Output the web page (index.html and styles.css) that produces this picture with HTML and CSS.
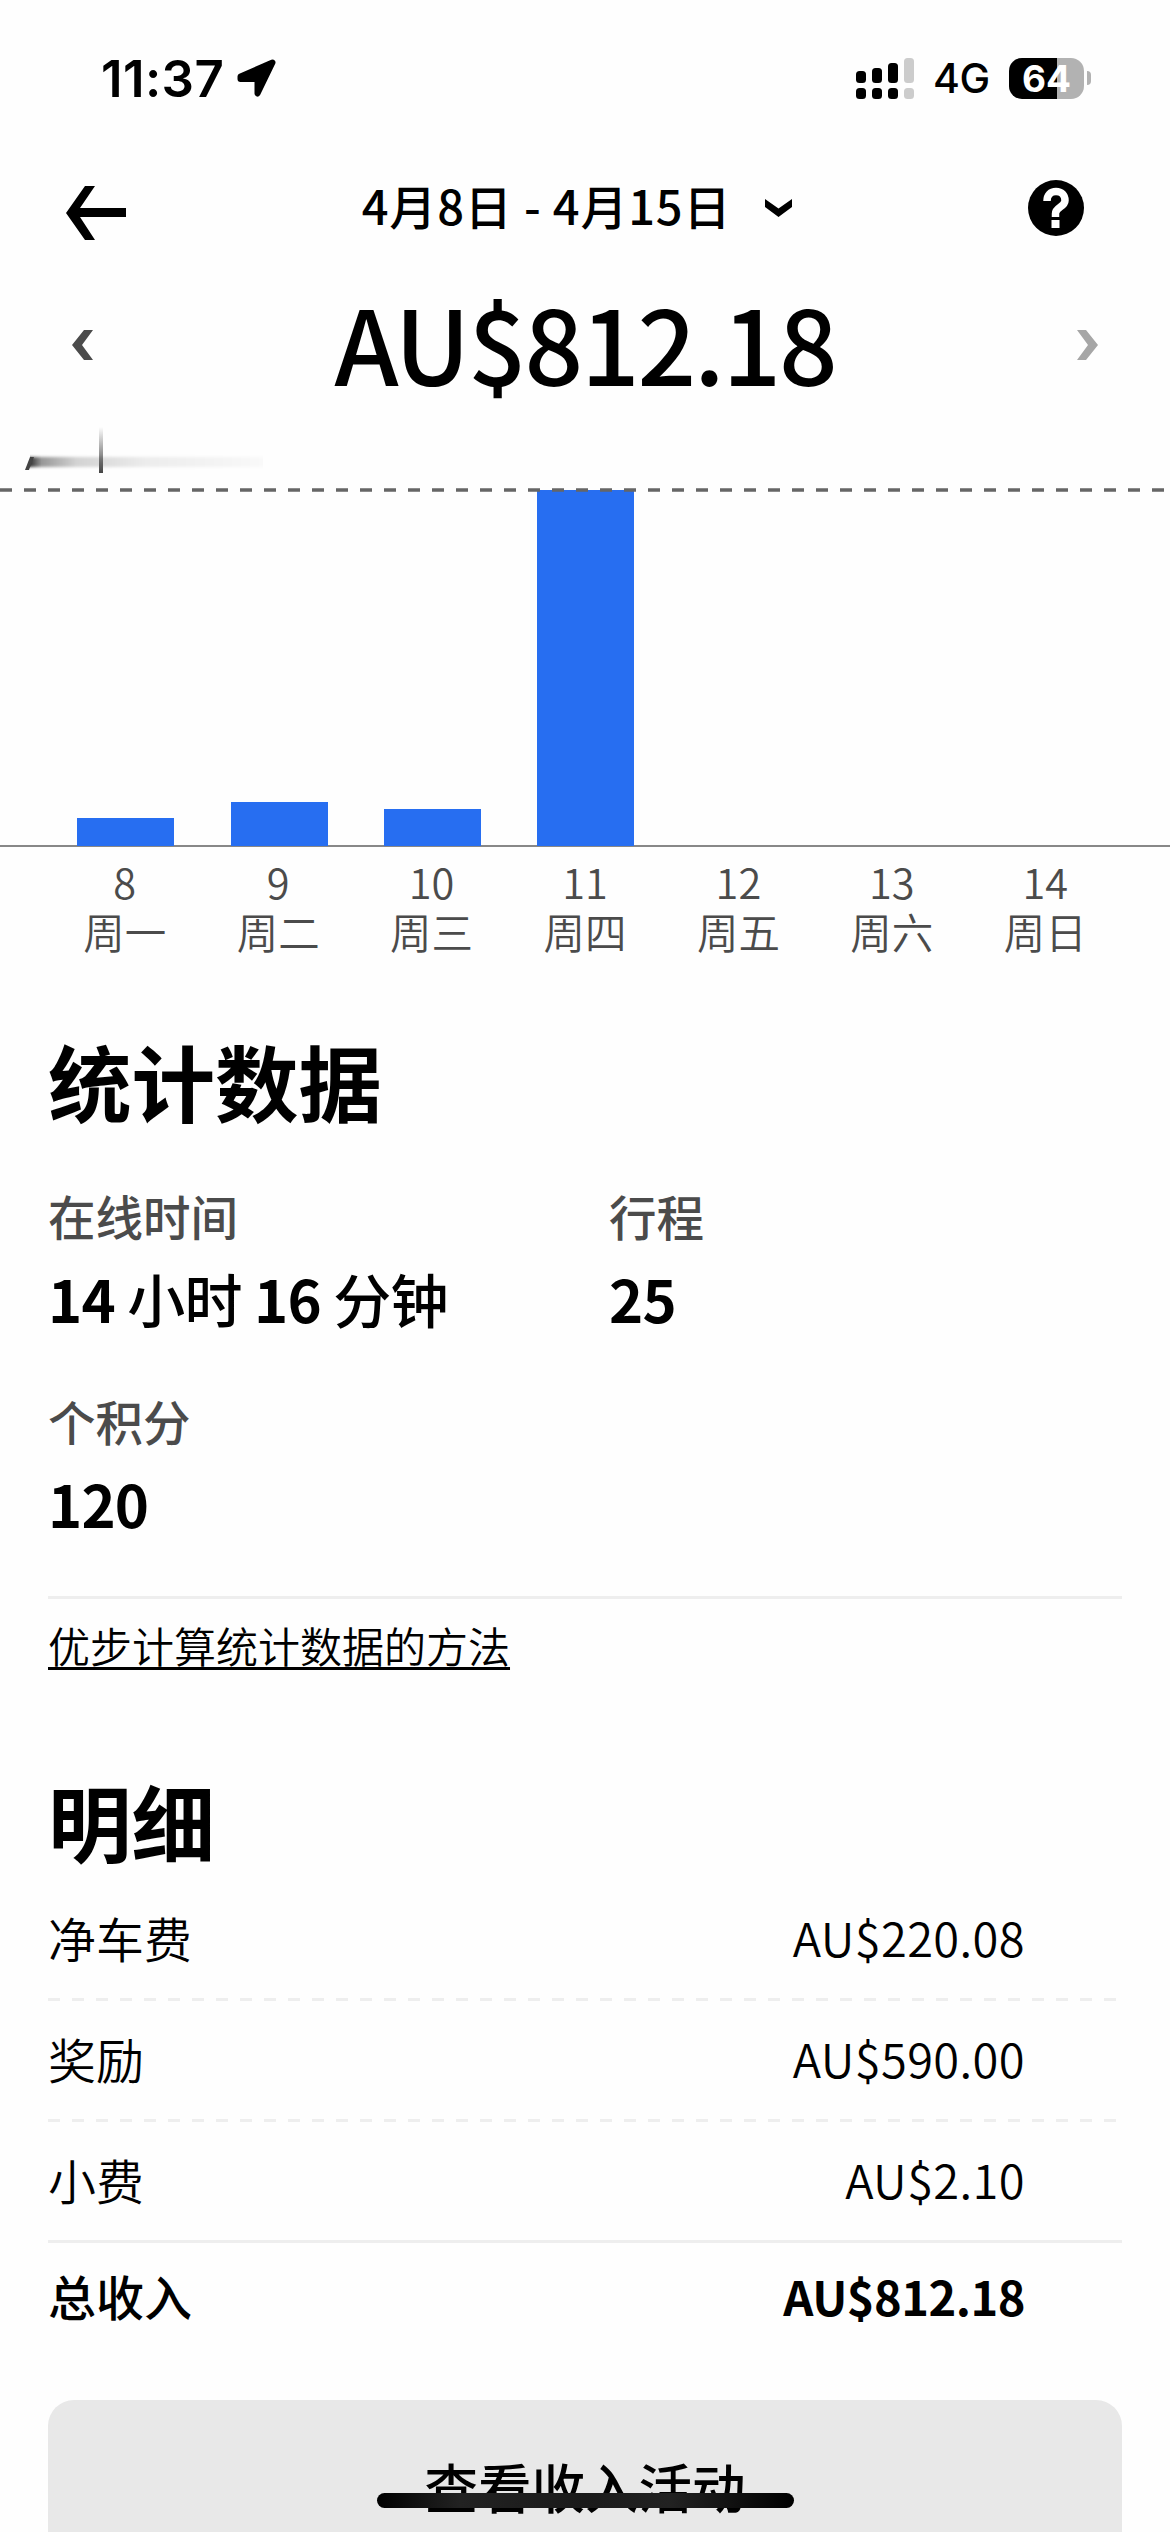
FILE: index.html
```html
<!DOCTYPE html>
<html lang="zh-CN">
<head>
  <meta charset="UTF-8">
  <title>收入 4月8日 - 4月15日</title>
  <link rel="stylesheet" href="styles.css">
</head>
<body>
  <div class="status-bar">
    <span class="time">11:37</span>
    <svg class="location" width="39" height="38" viewBox="0 0 39 38"><path d="M35.500 3.500L20.500 34.500V20H3.500V17.500Z" stroke="#000" stroke-width="6" stroke-linejoin="round"/></svg>
    <svg class="signal" width="58" height="41" viewBox="0 0 58 41">
      <rect x="0" y="13" width="10" height="12" rx="3.5"/>
      <rect x="16" y="10" width="10" height="15" rx="3.5"/>
      <rect x="32" y="5" width="10" height="20" rx="3.5"/>
      <rect x="48" y="0" width="10" height="25" rx="3.5" fill="#ccc"/>
      <rect x="0" y="30" width="10" height="11" rx="3.5"/>
      <rect x="16" y="30" width="10" height="11" rx="3.5"/>
      <rect x="32" y="30" width="10" height="11" rx="3.5"/>
      <rect x="48" y="30" width="10" height="11" rx="3.5" fill="#ccc"/>
    </svg>
    <span class="network">4G</span>
    <span class="battery">64</span>
    <span class="battery-cap"></span>
  </div>

  <header class="top">
    <svg class="back" width="60" height="54" viewBox="0 0 60 54"><path d="M19 0H29L14 22H60V31H14L29 54H19L0 27Z"/></svg>
    <div class="range">
      <span>4月8日 - 4月15日</span>
      <svg width="27" height="18" viewBox="0 0 27 18"><path d="M0 0L13.5 9.5L27 0V8L13.5 18L0 8Z"/></svg>
    </div>
    <svg class="help" width="56" height="56" viewBox="0 0 56 56">
      <circle cx="28" cy="28" r="28"/>
      <path d="M19 21C19 15 22.500 11.500 28 11.500S37 15 37 20.500C37 27 27.500 27 27.500 33.500V37" fill="none" stroke="#fff" stroke-width="7.500"/>
      <rect x="23.500" y="40" width="8" height="8" fill="#fff"/>
    </svg>
  </header>

  <div class="total">
    <svg width="21" height="30" viewBox="0 0 21 30" fill="#4b4b4b"><path d="M12 0H21L10 15L21 30H12L0 15Z"/></svg>
    <h1>AU$812.18</h1>
    <svg width="21" height="30" viewBox="0 0 21 30" fill="#a6a6a6"><path d="M9 0H0L11 15L0 30H9L21 15Z"/></svg>
  </div>

  <!-- Weekly chart -->
  <div class="chart">
    <svg class="max-label" width="250" height="50" viewBox="0 0 250 50">
      <defs>
        <linearGradient id="fadeX"><stop offset="0" stop-color="#000" stop-opacity=".8"/><stop offset=".05" stop-color="#000" stop-opacity=".4"/><stop offset=".2" stop-color="#000" stop-opacity=".17"/><stop offset=".5" stop-color="#000" stop-opacity=".07"/><stop offset="1" stop-color="#000" stop-opacity=".02"/></linearGradient>
        <linearGradient id="fadeY" x2="0" y2="1"><stop offset="0" stop-color="#444" stop-opacity="0"/><stop offset="1" stop-color="#444"/></linearGradient>
        <filter id="soft" x="-5%" y="-40%" width="110%" height="180%"><feGaussianBlur stdDeviation=".5 1.800"/></filter>
      </defs>
      <rect x="5" y="31" width="233" height="10" fill="url(#fadeX)" filter="url(#soft)"/>
      <path d="M5 31H9L4 44H0Z" fill="#444"/>
      <rect x="74" y="1" width="4" height="46" fill="url(#fadeY)"/>
    </svg>
    <svg class="max-line" width="1170" height="4"><path d="M0 2H1170" stroke="#666" stroke-width="3.500" stroke-dasharray="12 12"/></svg>
    <div class="bars">
      <div class="slot"><i class="bar" style="height: 28px"></i></div>
      <div class="slot"><i class="bar" style="height: 44px"></i></div>
      <div class="slot"><i class="bar" style="height: 37px"></i></div>
      <div class="slot"><i class="bar" style="height: 356px"></i></div>
      <div class="slot"></div>
      <div class="slot"></div>
      <div class="slot"></div>
    </div>
  </div>
  <div class="days">
    <div><span>8</span><span>周一</span></div>
    <div><span>9</span><span>周二</span></div>
    <div><span>10</span><span>周三</span></div>
    <div><span>11</span><span>周四</span></div>
    <div><span>12</span><span>周五</span></div>
    <div><span>13</span><span>周六</span></div>
    <div><span>14</span><span>周日</span></div>
  </div>

  <section class="stats">
    <h2>统计数据</h2>
    <div class="stats-grid">
      <div class="stat"><label>在线时间</label><strong>14 <span>小时</span> 16 <span>分钟</span></strong></div>
      <div class="stat"><label>行程</label><strong>25</strong></div>
      <div class="stat"><label>个积分</label><strong>120</strong></div>
    </div>
    <a class="method" href="#">优步计算统计数据的方法</a>
  </section>

  <section class="details">
    <h2>明细</h2>
    <div class="row"><span>净车费</span><span class="amount">AU$220.08</span></div>
    <svg class="dash" width="1074" height="3"><path d="M0 1.500H1074" stroke="#eee" stroke-width="3" stroke-dasharray="12 12"/></svg>
    <div class="row"><span>奖励</span><span class="amount">AU$590.00</span></div>
    <svg class="dash" width="1074" height="3"><path d="M0 1.500H1074" stroke="#eee" stroke-width="3" stroke-dasharray="12 12"/></svg>
    <div class="row"><span>小费</span><span class="amount">AU$2.10</span></div>
    <div class="row sum"><span>总收入</span><span class="amount">AU$812.18</span></div>
  </section>

  <button class="activity">查看收入活动</button>
  <div class="home-indicator"></div>
</body>
</html>
```
FILE: styles.css
```css
* {
  box-sizing: border-box;
}
body {
  margin: 0;
  width: 1170px;
  height: 2532px;
  overflow: hidden;
  position: relative;
  background: #fefefe;
  color: #000;
  font-family: "Noto Sans CJK SC", sans-serif;
}
svg {
  display: block;
  flex: none;
}
h1, h2 {
  margin: 0;
}

/* Status bar */
.status-bar {
  display: flex;
  align-items: center;
  height: 156px;
  padding: 0 79px 0 101px;
  font-family: Inter, "Noto Sans CJK SC", sans-serif;
}
.time {
  width: 136px;
  font-size: 51px;
  font-weight: 600;
  letter-spacing: 0.4px;
  white-space: nowrap;
}
.signal {
  margin-left: auto;
}
.network {
  width: 75px;
  margin-left: 19px;
  font-size: 41px;
  font-weight: 500;
  letter-spacing: -0.5px;
}
.battery {
  width: 75px;
  height: 41px;
  margin-left: 1px;
  border-radius: 13px;
  background: linear-gradient(90deg, #000 48px, #b2b2b2 48px);
  color: #fff;
  font-size: 37px;
  font-weight: 700;
  line-height: 42px;
  text-align: center;
}
.battery-cap {
  width: 4px;
  height: 14px;
  margin-left: 3px;
  border-radius: 0 4px 4px 0;
  background: #b2b2b2;
}

/* Header */
.top {
  display: flex;
  align-items: center;
  justify-content: space-between;
  height: 104px;
  padding: 0 86px 0 66px;
}
.back {
  margin-top: 10px;
}
.range {
  display: flex;
  align-items: center;
  gap: 34px;
  font-size: 47px;
  font-weight: 500;
  line-height: 96px;
  letter-spacing: 0.8px;
}
.range span {
  padding-bottom: 6px;
}
.total {
  display: flex;
  align-items: center;
  justify-content: space-between;
  height: 170px;
  padding: 0 72px;
}
.total h1 {
  padding-bottom: 7px;
  font-size: 103px;
  font-weight: 500;
  line-height: 160px;
  letter-spacing: -2.2px;
}

/* Chart */
.chart {
  position: relative;
  height: 417px;
  border-bottom: 2px solid #888;
}
.max-label {
  position: absolute;
  left: 25px;
  top: -4px;
}
.max-line {
  position: absolute;
  left: 0;
  top: 58px;
  z-index: 1;
}
.bars {
  display: flex;
  height: 416px;
  padding: 0 47px 0 49px;
  position: relative;
}
.slot {
  flex: 1;
  display: flex;
  align-items: flex-end;
  justify-content: center;
}
.bar {
  width: 97px;
  background: #276ef1;
}
.days {
  display: flex;
  padding: 9px 48px 0;
  color: #4b4b4b;
  font-size: 41.5px;
  font-weight: 350;
}
.days div {
  flex: 1;
  text-align: center;
}
.days span {
  display: block;
  line-height: 50px;
}

/* Stats */
.stats, .details {
  padding: 0 48px;
}
h2 {
  font-size: 83.5px;
  font-weight: 700;
  line-height: 120px;
}
.stats h2 {
  margin-top: 64px;
}
.stats-grid {
  display: grid;
  grid-template-columns: 561px 1fr;
  row-gap: 48px;
  height: 418px;
  margin-top: 41px;
  align-content: start;
  border-bottom: 3px solid #eee;
}
.stat label {
  display: block;
  color: #4b4b4b;
  font-size: 47.5px;
  font-weight: 500;
  line-height: 70px;
}
.stat strong {
  display: block;
  margin-top: 7px;
  font-size: 58px;
  font-weight: 700;
  line-height: 80px;
  letter-spacing: -0.8px;
}
.stat strong span {
  font-weight: 500;
}
.method {
  display: inline-block;
  margin-top: 17px;
  color: #000;
  font-size: 42px;
  font-weight: 350;
  line-height: 58px;
  text-underline-offset: 4px;
  text-decoration-thickness: 3px;
}

/* Breakdown */
.details {
  margin-top: 86px;
}
.row {
  display: flex;
  align-items: center;
  justify-content: space-between;
  height: 118px;
  padding: 0 97px 5px 0;
  font-size: 48px;
  font-weight: 350;
}
.amount {
  font-size: 47px;
  letter-spacing: 0.4px;
}
.row.sum {
  height: 107px;
  padding-bottom: 0;
  border-top: 3px solid #eee;
  font-weight: 500;
}
.sum .amount {
  font-weight: 700;
  letter-spacing: -0.5px;
}
.activity {
  display: block;
  width: 1074px;
  height: 170px;
  margin: 53px 48px 0;
  padding: 0;
  border: none;
  border-radius: 26px;
  background: #e8e8e8;
  color: #000;
  font: 500 53.5px "Noto Sans CJK SC", sans-serif;
}
.home-indicator {
  position: absolute;
  left: 377px;
  top: 2493px;
  width: 417px;
  height: 15px;
  border-radius: 8px;
  background: linear-gradient(90deg, #000, #222 20%, #1a1a1a 50%, #222 70%, #000);
}
```
